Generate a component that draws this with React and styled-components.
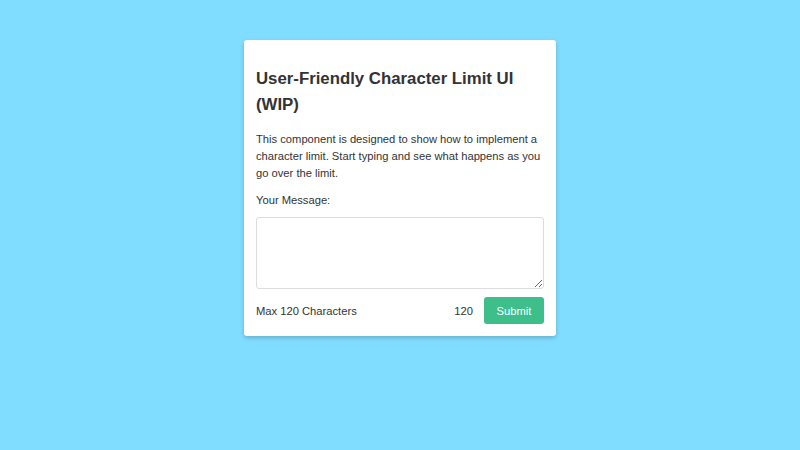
import React, { useState } from 'react';
import styled, { createGlobalStyle } from 'styled-components';

const GlobalStyle = createGlobalStyle`
  html, body {
    margin: 0;
    padding: 0;
    background-color: #80ddff;
    font-family: "Liberation Sans", Arial, sans-serif;
    color: #333;
  }
`;

const Page = styled.div`
  min-height: 450px;
  display: flex;
  justify-content: center;
  align-items: flex-start;
  padding-top: 40px;
  box-sizing: border-box;
`;

const Card = styled.div`
  width: 312px;
  box-sizing: border-box;
  padding: 12px 12px 12px;
  background-color: #fff;
  border-radius: 3px;
  box-shadow: 0 2px 4px rgba(0, 0, 0, 0.2);
`;

const Title = styled.h2`
  margin: 14px 0 13px;
  font-size: 16.8px;
  line-height: 26px;
  font-weight: 700;
  color: #333;
`;

const Description = styled.p`
  margin: 0 0 11px;
  font-size: 11.2px;
  line-height: 16.8px;
  color: #333;
`;

const Label = styled.label`
  display: block;
  margin-bottom: 8px;
  font-size: 11.2px;
  line-height: 16.8px;
`;

const MessageInput = styled.textarea`
  display: block;
  width: 100%;
  height: 72px;
  margin: 0;
  box-sizing: border-box;
  border: 1px solid #ddd;
  border-radius: 3px;
  padding: 6px;
  font-family: inherit;
  font-size: 11.2px;
  color: #333;
  resize: vertical;
  &:focus {
    outline: none;
    border-color: #3dbe8b;
  }
`;

const Footer = styled.div`
  display: flex;
  align-items: center;
  margin-top: 8px;
  font-size: 11.2px;
`;

const Hint = styled.span`
  flex: 1;
`;

const Count = styled.span`
  margin-right: 11px;
  color: ${props => (props.$over ? '#e0474c' : '#333')};
`;

const SubmitButton = styled.button`
  width: 60px;
  height: 27px;
  padding: 0;
  border: none;
  border-radius: 3px;
  background-color: #3dbe8b;
  color: #fff;
  font-family: inherit;
  font-size: 11.2px;
  cursor: pointer;
`;

const LIMIT = 120;

export default function App() {
  const [message, setMessage] = useState('');
  const remaining = LIMIT - message.length;

  return (
    <>
      <GlobalStyle />
      <Page>
        <Card>
          <Title>User-Friendly Character Limit UI (WIP)</Title>
          <Description>
            This component is designed to show how to implement a character limit. Start typing and see what happens as you go over the limit.
          </Description>
          <Label htmlFor="msg">Your Message:</Label>
          <MessageInput id="msg" value={message} onChange={e => setMessage(e.target.value)} />
          <Footer>
            <Hint>Max {LIMIT} Characters</Hint>
            <Count $over={remaining < 0}>{remaining}</Count>
            <SubmitButton>Submit</SubmitButton>
          </Footer>
        </Card>
      </Page>
    </>
  );
}
